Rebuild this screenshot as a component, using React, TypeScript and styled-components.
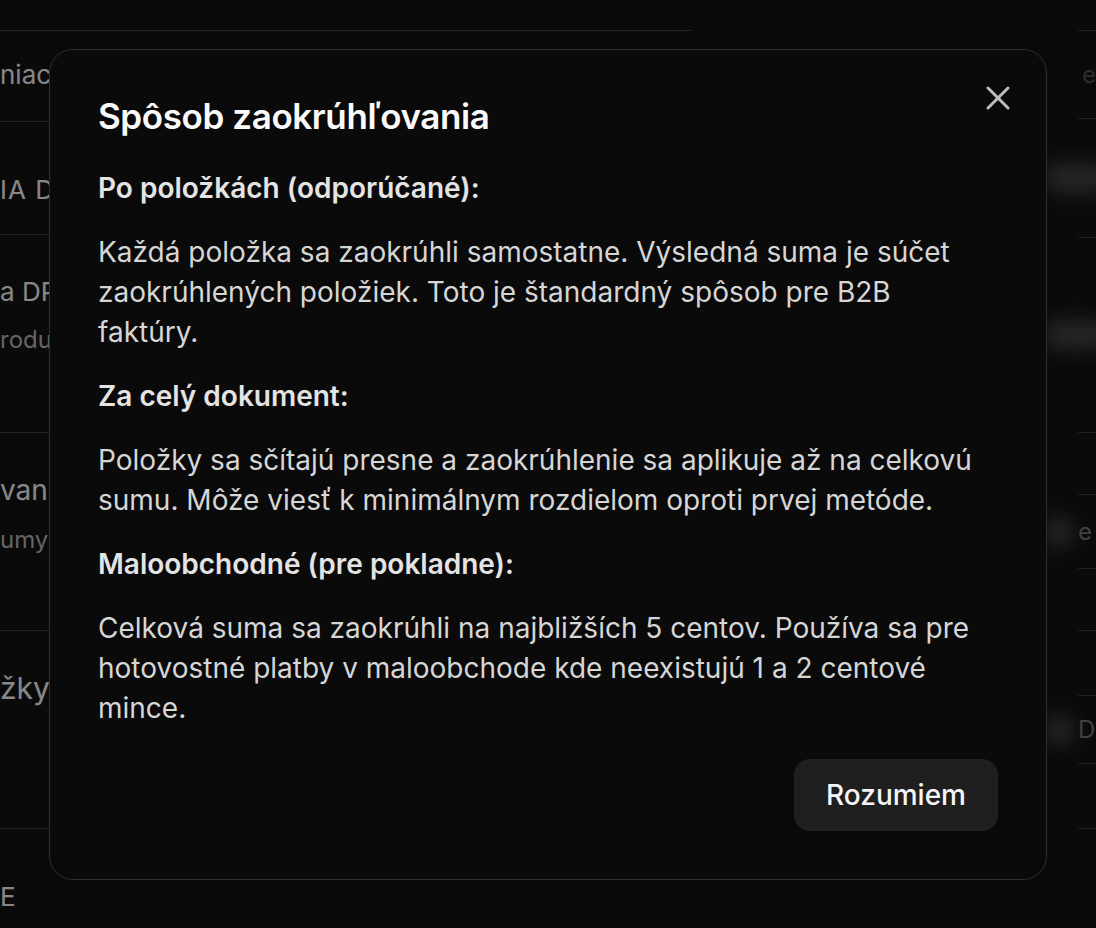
import React from "react";
import styled, { createGlobalStyle } from "styled-components";
import { X } from "lucide-react";

const GlobalStyle = createGlobalStyle`
  * { box-sizing: border-box; }
  html, body {
    margin: 0;
    padding: 0;
    background: #121212;
    font-family: Inter, "Noto Sans", sans-serif;
    -webkit-font-smoothing: antialiased;
  }
`;

/* page behind the dialog */
const Page = styled.div`
  display: flex;
  height: 100vh;
  padding-top: 30px;
  overflow: hidden;
`;

const LeftPane = styled.div`
  width: 692px;
  border-top: 1px solid #404040;
  display: flex;
  flex-direction: column;
`;

const Row = styled.div<{ $h?: number; $pt: number; $gap?: number }>`
  display: flex;
  flex-direction: column;
  gap: ${(p) => p.$gap ?? 12}px;
  height: ${(p) => (p.$h ? `${p.$h + 1}px` : "auto")};
  padding-top: ${(p) => p.$pt}px;
  border-bottom: ${(p) => (p.$h ? "1px solid #3a3a3a" : "none")};
  white-space: nowrap;
`;

const RowTitle = styled.span<{ $size?: number; $caps?: boolean }>`
  font-size: ${(p) => p.$size ?? 26}px;
  line-height: 36px;
  color: #e2e2e2;
  letter-spacing: ${(p) => (p.$caps ? "1px" : "0")};
`;

const RowSub = styled.span`
  font-size: 24px;
  line-height: 36px;
  color: #a8a8a8;
`;

const RightPane = styled.div`
  margin-left: auto;
  width: 50px;
  display: flex;
  flex-direction: column;
`;

const SideRow = styled.div<{ $h: number }>`
  height: ${(p) => p.$h}px;
  margin-left: 32px;
  border-top: 1px solid #353535;
  display: flex;
  align-items: center;
  white-space: nowrap;
  overflow: hidden;
`;

const SideRowWide = styled(SideRow)`
  overflow: visible;
`;

const SideText = styled.span<{ $dim?: boolean }>`
  font-size: 24px;
  color: ${(p) => (p.$dim ? "#4c4c4c" : "#6e6e6e")};
  margin-left: 4px;
`;

const Glow = styled.span<{ $w: number }>`
  flex: none;
  width: ${(p) => p.$w}px;
  height: 30px;
  margin-left: -34px;
  border-radius: 15px;
  background: #3e3e3e;
  filter: blur(9px);
`;

/* dialog */
const Overlay = styled.div`
  position: fixed;
  inset: 0;
  background: rgba(0, 0, 0, 0.4);
  display: flex;
  align-items: center;
  justify-content: center;
`;

const Dialog = styled.div`
  position: relative;
  width: 998px;
  padding: 48px;
  background: #0a0a0a;
  border: 1px solid #303030;
  border-radius: 24px;
  display: flex;
  flex-direction: column;
`;

const CloseButton = styled.button`
  position: absolute;
  top: 28px;
  right: 28px;
  width: 40px;
  height: 40px;
  padding: 0;
  border: none;
  background: transparent;
  color: #bdbdbd;
  display: flex;
  align-items: center;
  justify-content: center;
  cursor: pointer;
`;

const Title = styled.h2`
  margin: 0 0 33px;
  font-size: 35px;
  line-height: 37px;
  font-weight: 600;
  color: #fafafa;
  letter-spacing: -0.4px;
`;

const Body = styled.div`
  display: flex;
  flex-direction: column;
  gap: 24px;
`;

const Heading = styled.p`
  margin: 0;
  font-size: 28px;
  line-height: 40px;
  font-weight: 600;
  color: #e4e4e4;
`;

const Text = styled.p`
  margin: 0;
  font-size: 28px;
  line-height: 40px;
  color: #d6d6d6;
`;

const Footer = styled.div`
  display: flex;
  justify-content: flex-end;
  margin-top: 31px;
`;

const PrimaryButton = styled.button`
  height: 72px;
  padding: 0 32px;
  border: none;
  border-radius: 16px;
  background: #1f1f1f;
  color: #f5f5f5;
  font-family: inherit;
  font-size: 28px;
  font-weight: 500;
  cursor: pointer;
`;

const sections = [
  {
    heading: "Po položkách (odporúčané):",
    text: "Každá položka sa zaokrúhli samostatne. Výsledná suma je súčet zaokrúhlených položiek. Toto je štandardný spôsob pre B2B faktúry.",
  },
  {
    heading: "Za celý dokument:",
    text: "Položky sa sčítajú presne a zaokrúhlenie sa aplikuje až na celkovú sumu. Môže viesť k minimálnym rozdielom oproti prvej metóde.",
  },
  {
    heading: "Maloobchodné (pre pokladne):",
    text: "Celková suma sa zaokrúhli na najbližších 5 centov. Používa sa pre hotovostné platby v maloobchode kde neexistujú 1 a 2 centové mince.",
  },
];

export default function App() {
  return (
    <>
      <GlobalStyle />
      <Page>
        <LeftPane>
          <Row $h={90} $pt={26}>
            <RowTitle>niaceho dokladu</RowTitle>
          </Row>
          <Row $h={112} $pt={50}>
            <RowTitle $caps>IA DPH</RowTitle>
          </Row>
          <Row $h={197} $pt={39}>
            <RowTitle>a DPH</RowTitle>
            <RowSub>roduktov</RowSub>
          </Row>
          <Row $h={197} $pt={39} $gap={14}>
            <RowTitle $size={28}>vania</RowTitle>
            <RowSub>umy</RowSub>
          </Row>
          <Row $h={197} $pt={39}>
            <RowTitle $size={30}>žky</RowTitle>
          </Row>
          <Row $pt={50}>
            <RowTitle $caps>E</RowTitle>
          </Row>
        </LeftPane>
        <RightPane>
          <SideRow $h={88}>
            <SideText $dim>ez</SideText>
          </SideRow>
          <SideRowWide $h={119}>
            <Glow $w={66} />
          </SideRowWide>
          <SideRowWide $h={195}>
            <Glow $w={66} />
          </SideRowWide>
          <SideRow $h={62} />
          <SideRowWide $h={74}>
            <Glow $w={30} />
            <SideText>e</SideText>
          </SideRowWide>
          <SideRow $h={62} />
          <SideRow $h={65} />
          <SideRowWide $h={68}>
            <Glow $w={30} />
            <SideText>D</SideText>
          </SideRowWide>
          <SideRow $h={65} />
          <SideRow $h={100} />
        </RightPane>
      </Page>

      <Overlay>
        <Dialog role="dialog" aria-labelledby="rounding-title">
          <CloseButton aria-label="Zavrieť">
            <X size={40} strokeWidth={1.8} />
          </CloseButton>
          <Title id="rounding-title">Spôsob zaokrúhľovania</Title>
          <Body>
            {sections.map((s) => (
              <React.Fragment key={s.heading}>
                <Heading>{s.heading}</Heading>
                <Text>{s.text}</Text>
              </React.Fragment>
            ))}
          </Body>
          <Footer>
            <PrimaryButton>Rozumiem</PrimaryButton>
          </Footer>
        </Dialog>
      </Overlay>
    </>
  );
}
